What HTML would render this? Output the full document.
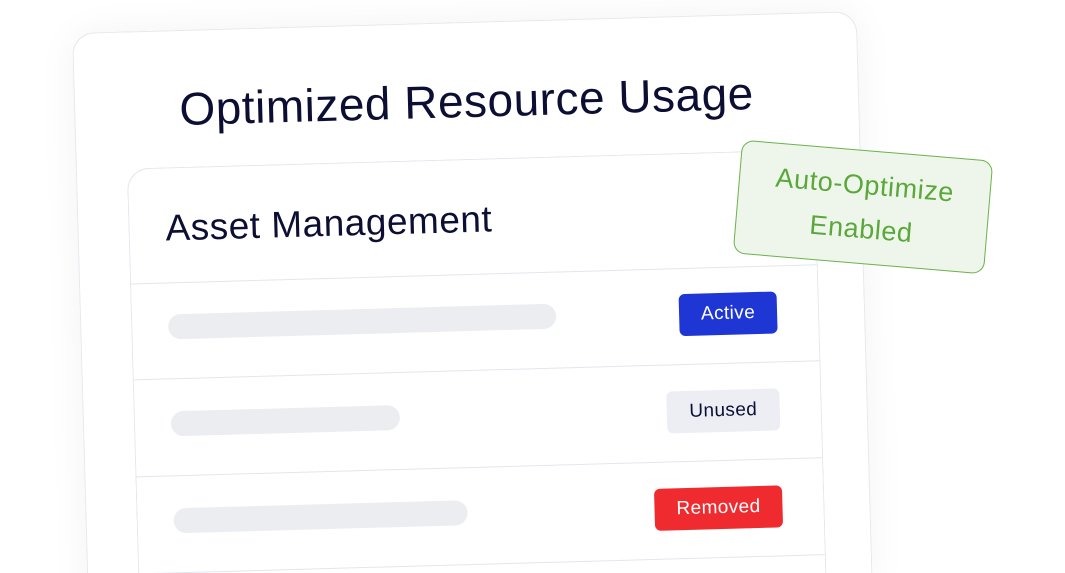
<!DOCTYPE html>
<html><head><style>
html,body{margin:0;padding:0;width:1065px;height:573px;overflow:hidden}
body{background:#fff;position:relative;font-family:"Liberation Sans",sans-serif}
.card{position:absolute;left:72px;top:33px;width:783px;height:566px;background:#fff;border:1px solid #e6e8ee;border-bottom:none;border-radius:22px 22px 0 0;transform-origin:0 0;transform:rotate(-1.6deg);box-shadow:0 0 40px rgba(0,0,0,0.05);overflow:hidden}
.title{position:absolute;left:0;width:783px;top:51px;text-align:center;font-size:46px;color:#0c0f33;letter-spacing:0.5px}
.inner{position:absolute;left:50px;top:136px;width:686px;height:440px;border:1px solid #e3e6ee;border-bottom:none;border-radius:22px 22px 0 0;background:#fff}
.hdr{position:absolute;left:36px;top:39px;font-size:37px;color:#0c0f33;letter-spacing:0.5px}
.line{position:absolute;left:0;right:0;height:1px;background:#e3e6ee}
.bar{position:absolute;height:25px;border-radius:13px;background:#ebedf1;left:36px}
.b{position:absolute;height:42px;border-radius:6px;font-size:19px;line-height:42px;text-align:center;letter-spacing:0.4px}
.green{position:absolute;left:737px;top:150px;width:252px;height:114px;border:1.5px solid #6cb14c;border-radius:12px;background:#eef6eb;color:#5aa83a;font-size:27px;text-align:center;line-height:44px;box-sizing:border-box;padding-top:12px;transform:rotate(4.8deg);letter-spacing:0.6px}
</style></head><body>
<div class="card">
  <div class="title">Optimized Resource Usage</div>
  <div class="inner">
    <div class="hdr">Asset Management</div>
    <div class="line" style="top:114px"></div>
    <div class="bar" style="top:146px;width:388px"></div>
    <div class="b" style="right:41px;top:140px;width:98px;background:#1e36d4;color:#fff">Active</div>
    <div class="line" style="top:210px"></div>
    <div class="bar" style="top:243px;width:229px"></div>
    <div class="b" style="right:41px;top:237px;width:113px;background:#eceef4;color:#0c0f33">Unused</div>
    <div class="line" style="top:307px"></div>
    <div class="bar" style="top:340px;width:294px"></div>
    <div class="b" style="right:41px;top:334px;width:128px;background:#ef2b2f;color:#fff">Removed</div>
    <div class="line" style="top:404px"></div>
  </div>
</div>
<div class="green">Auto-Optimize<br>Enabled</div>
</body></html>
